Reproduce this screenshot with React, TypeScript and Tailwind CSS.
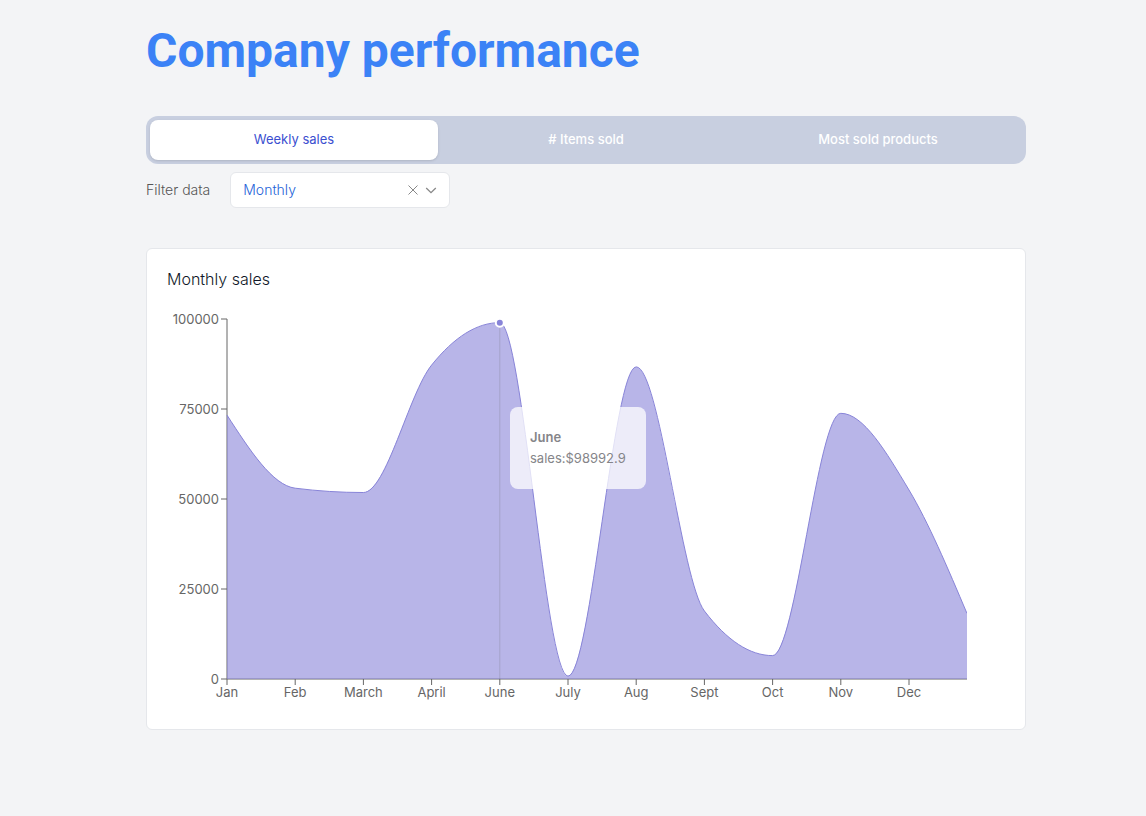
import { useState } from 'react';

type Point = { x: number; y: number };

const PLOT = { left: 60, top: 10, width: 740, height: 360 };
const MAX_SALES = 100000;
const STEP = 68.2;

const months = ['Jan', 'Feb', 'March', 'April', 'June', 'July', 'Aug', 'Sept', 'Oct', 'Nov', 'Dec'];
const sales = [73300, 53000, 51800, 87200, 98992.9, 800, 86700, 18900, 6500, 73800, 52500];
const closing = { x: 740, sales: 18200 };
const yTicks = [0, 25000, 50000, 75000, 100000];

const scaleY = (value: number) => PLOT.top + PLOT.height * (1 - value / MAX_SALES);

const points: Point[] = [
  ...sales.map((value, i) => ({ x: PLOT.left + i * STEP, y: scaleY(value) })),
  { x: PLOT.left + closing.x, y: scaleY(closing.sales) },
];

// Monotone cubic interpolation, so the curve never overshoots a data point.
function monotonePath(pts: Point[]) {
  const n = pts.length;
  const h = pts.slice(1).map((p, i) => p.x - pts[i].x);
  const s = pts.slice(1).map((p, i) => (p.y - pts[i].y) / h[i]);
  const t: number[] = new Array(n).fill(0);
  for (let i = 1; i < n - 1; i++) {
    const p = (s[i - 1] * h[i] + s[i] * h[i - 1]) / (h[i - 1] + h[i]);
    t[i] =
      (Math.sign(s[i - 1]) + Math.sign(s[i])) *
      Math.min(Math.abs(s[i - 1]), Math.abs(s[i]), 0.5 * Math.abs(p));
  }
  t[0] = (3 * s[0] - t[1]) / 2;
  t[n - 1] = (3 * s[n - 2] - t[n - 2]) / 2;
  let d = `M${pts[0].x},${pts[0].y}`;
  for (let i = 0; i < n - 1; i++) {
    const a = pts[i];
    const b = pts[i + 1];
    const k = h[i] / 3;
    d += `C${a.x + k},${a.y + k * t[i]},${b.x - k},${b.y - k * t[i + 1]},${b.x},${b.y}`;
  }
  return d;
}

function SalesChart() {
  const line = monotonePath(points);
  const bottom = PLOT.top + PLOT.height;
  const right = PLOT.left + PLOT.width;
  const active = points[4];
  return (
    <div className="relative w-[800px]">
      <svg width="800" height="400" viewBox="0 0 800 400" role="img" aria-label="Monthly sales" className="block">
        <g stroke="#666" fill="none">
          <line x1={PLOT.left} y1={bottom} x2={right} y2={bottom} />
          {months.map((m, i) => (
            <line key={m} x1={PLOT.left + i * STEP} y1={bottom} x2={PLOT.left + i * STEP} y2={bottom + 6} />
          ))}
          <line x1={PLOT.left} y1={PLOT.top} x2={PLOT.left} y2={bottom} />
          {yTicks.map((v) => (
            <line key={v} x1={PLOT.left - 6} y1={scaleY(v)} x2={PLOT.left} y2={scaleY(v)} />
          ))}
        </g>
        <g className="fill-[#666] text-[13px]">
          {months.map((m, i) => (
            <text key={m} x={PLOT.left + i * STEP} y={bottom + 18} textAnchor="middle">
              {m}
            </text>
          ))}
          {yTicks.map((v) => (
            <text key={v} x={PLOT.left - 8} y={scaleY(v) + 5} textAnchor="end">
              {v}
            </text>
          ))}
        </g>
        <path d={`${line}L${right},${bottom}L${PLOT.left},${bottom}Z`} fill="#8884d8" fillOpacity="0.6" />
        <path d={line} fill="none" stroke="#8884d8" />
        <line x1={active.x} y1={active.y} x2={active.x} y2={bottom} stroke="#666" strokeOpacity="0.22" />
        <circle cx={active.x} cy={active.y} r="4" fill="#8884d8" stroke="#fff" strokeWidth="2" />
      </svg>
      <div className="absolute left-[343px] top-[98px] rounded-lg bg-white/75 p-5 text-[13px] leading-[21px] text-[#858589]">
        <p className="font-semibold">June</p>
        <p>sales:$98992.9</p>
      </div>
    </div>
  );
}

const tabs = ['Weekly sales', '# Items sold', 'Most sold products'];

export default function App() {
  const [selected, setSelected] = useState(0);
  const [period, setPeriod] = useState('Monthly');
  return (
    <div className="min-h-screen bg-gray-100 pt-[27px] pr-6 pb-20 pl-[50px] font-[Inter,sans-serif]">
      <main className="mx-auto max-w-[880px]">
        <h1 className="font-[Roboto,sans-serif] text-5xl leading-none font-bold text-[#3b82f6]">Company performance</h1>

        <div role="tablist" className="mt-[41px] flex gap-1 rounded-xl bg-[#c8cfe0] p-1">
          {tabs.map((label, i) => (
            <button
              key={label}
              type="button"
              role="tab"
              aria-selected={selected === i}
              onClick={() => setSelected(i)}
              className={
                selected === i
                  ? 'h-10 flex-1 rounded-lg bg-white text-[13px] text-[#3b4fd0] shadow'
                  : 'h-10 flex-1 rounded-lg text-[13px] font-medium text-white'
              }
            >
              {label}
            </button>
          ))}
        </div>

        <div className="mt-2 flex items-center gap-5">
          <label htmlFor="period" className="text-sm font-light text-[#555]">
            Filter data
          </label>
          <div className="relative w-[220px]">
            <select
              id="period"
              value={period}
              onChange={(e) => setPeriod(e.target.value)}
              className="block h-9 w-full appearance-none rounded-md border border-gray-200 bg-white px-3 text-sm font-light text-[#2563d8]"
            >
              <option value="">Select</option>
              <option>Weekly</option>
              <option>Monthly</option>
            </select>
            <button
              type="button"
              aria-label="Clear"
              onClick={() => setPeriod('')}
              className="absolute top-3 right-[31px] size-3 text-[#888]"
            >
              <svg viewBox="0 0 12 12" className="size-3" fill="none" stroke="currentColor">
                <path d="M1.500 1.500l9 9M10.500 1.500l-9 9" />
              </svg>
            </button>
            <svg
              viewBox="0 0 12 12"
              className="pointer-events-none absolute top-3 right-[13px] size-3 text-[#888]"
              fill="none"
              stroke="currentColor"
              strokeWidth="1.3"
            >
              <path d="M1.200 4L6 8.700L10.800 4" />
            </svg>
          </div>
        </div>

        <section className="mt-10 rounded-md border border-gray-200 bg-white p-5">
          <h2 className="text-base leading-5 font-light text-gray-900">Monthly sales</h2>
          <div className="mt-5 overflow-x-auto overflow-y-hidden">
            <SalesChart />
          </div>
        </section>
      </main>
    </div>
  );
}
